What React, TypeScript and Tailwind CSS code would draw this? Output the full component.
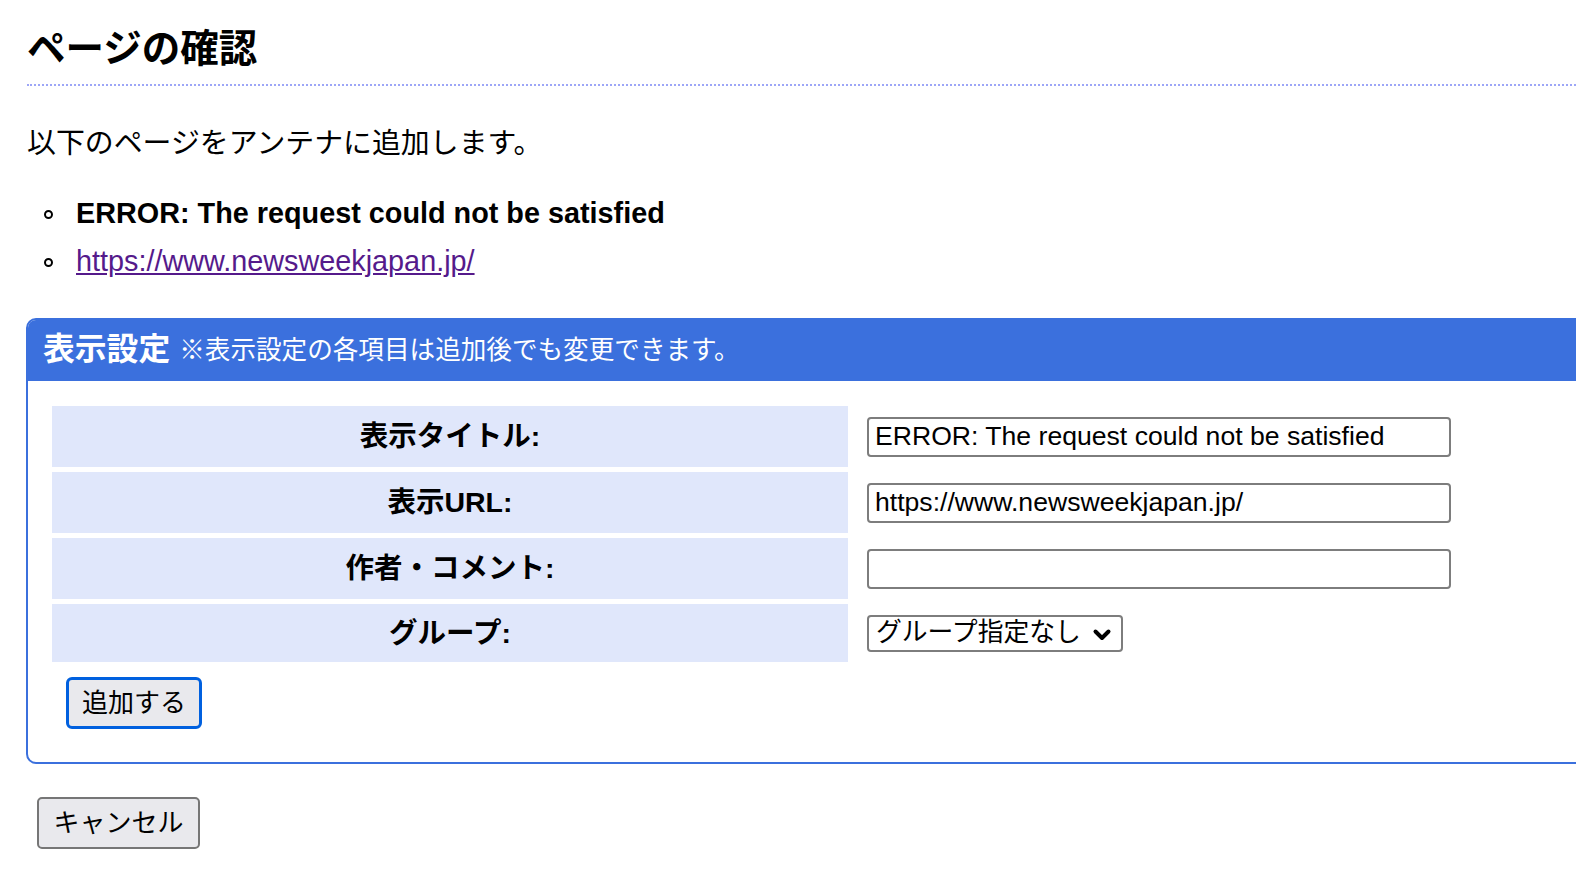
import React from "react";

const jp = { fontFamily: '"Liberation Sans", "Noto Sans CJK JP", sans-serif' } as React.CSSProperties;

function Row({ label, children, last }: { label: string; children: React.ReactNode; last?: boolean }) {
  return (
    <>
      <div
        className={`${last ? "h-[58px]" : "h-[61px]"} bg-[#e0e7fb] flex items-center justify-center text-[28.5px] font-bold text-black`}
      >
        {label}
      </div>
      <div className={`${last ? "h-[58px]" : "h-[61px]"} flex items-center pl-[15px]`}>{children}</div>
    </>
  );
}

export default function App() {
  return (
    <div className="w-full min-h-screen overflow-hidden bg-white text-black" style={jp}>
      <div className="pl-[27px]">
        <h1 className="mt-[26px] text-[38.5px] leading-[45px] font-bold pb-[13px] border-b-2 border-dotted border-[#9da6f7]">
          ページの確認
        </h1>
        <p className="mt-[37px] text-[28.9px] leading-[40px]">以下のページをアンテナに追加します。</p>
        <ul className="mt-[27px]">
          <li className="flex items-center h-[48px]">
            <span className="ml-[17px] w-[9px] h-[9px] rounded-full border-2 border-black" />
            <span className="ml-[23px] text-[28.8px] font-bold">ERROR: The request could not be satisfied</span>
          </li>
          <li className="flex items-center h-[48px]">
            <span className="ml-[17px] w-[9px] h-[9px] rounded-full border-2 border-black" />
            <a href="#" className="ml-[23px] text-[28.8px] text-[#551a8b] underline">
              https://www.newsweekjapan.jp/
            </a>
          </li>
        </ul>
        <div className="mt-[32px] w-[1620px] -ml-[1px] border-2 border-[#3b70dd] rounded-tl-[10px] rounded-bl-[10px] overflow-hidden">
          <div className="h-[62px] -mt-[1px] bg-[#3b70dd] flex items-center pl-[15px] text-white">
            <span className="text-[31.8px] font-bold leading-none">表示設定</span>
            <span className="ml-[9px] text-[25.6px] leading-none mt-[2px]">※表示設定の各項目は追加後でも変更できます。</span>
          </div>
          <div className="mt-[25px] ml-[24px] grid grid-cols-[796px_700px] gap-x-[4px] gap-y-[5px]">
            <Row label="表示タイトル:">
              <input
                defaultValue="ERROR: The request could not be satisfied"
                className="w-[584px] h-[40px] border-2 border-[#7d7d7d] rounded-[4px] pl-[6px] text-[26.6px] text-black outline-none"
                style={jp}
              />
            </Row>
            <Row label="表示URL:">
              <input
                defaultValue="https://www.newsweekjapan.jp/"
                className="w-[584px] h-[40px] border-2 border-[#7d7d7d] rounded-[4px] pl-[6px] text-[26.6px] text-black outline-none"
                style={jp}
              />
            </Row>
            <Row label="作者・コメント:">
              <input
                defaultValue=""
                className="w-[584px] h-[40px] border-2 border-[#7d7d7d] rounded-[4px] pl-[6px] text-[26.6px] text-black outline-none"
                style={jp}
              />
            </Row>
            <Row label="グループ:" last>
              <div className="relative w-[256px] h-[37px] border-2 border-[#7d7d7d] rounded-[4px] flex items-center">
                <span className="pl-[7px] text-[25.8px] leading-none">グループ指定なし</span>
                <svg
                  className="absolute right-[9px] top-[11px]"
                  width="20"
                  height="14"
                  viewBox="0 0 20 14"
                  fill="none"
                >
                  <path d="M3.5 3.5 L10 10 L16.5 3.5" stroke="black" strokeWidth="4" strokeLinecap="round" strokeLinejoin="round" />
                </svg>
              </div>
            </Row>
          </div>
          <div className="ml-[38px] mt-[15px] mb-[33px]">
            <button
              className="w-[136px] h-[52px] border-[3px] border-[#0060df] rounded-[6px] bg-[#e9e9ed] text-[26px] text-black flex items-center justify-center"
              style={jp}
            >
              追加する
            </button>
          </div>
        </div>
        <div className="mt-[33px] ml-[10px]">
          <button
            className="w-[163px] h-[52px] border-2 border-[#767676] rounded-[5px] bg-[#e9e9ed] text-[26px] text-black flex items-center justify-center"
            style={jp}
          >
            キャンセル
          </button>
        </div>
      </div>
    </div>
  );
}
